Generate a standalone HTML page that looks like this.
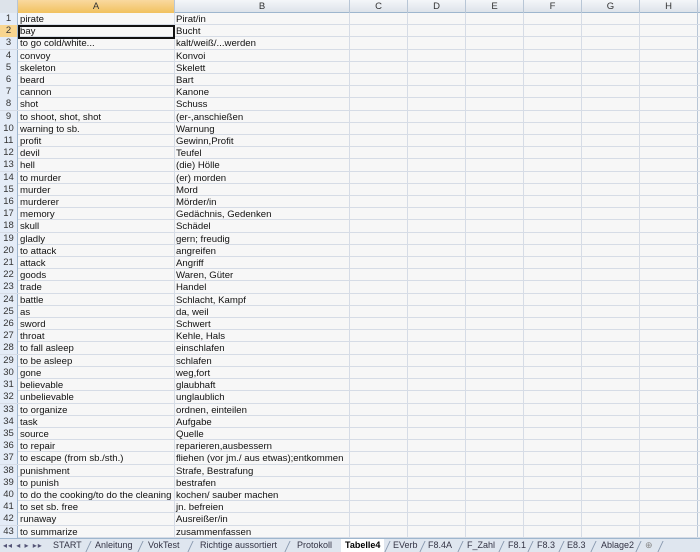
<!DOCTYPE html>
<html><head><meta charset="utf-8"><style>
*{margin:0;padding:0;box-sizing:border-box}
body{width:700px;height:552px;overflow:hidden;background:#f7f7f7;font-family:"Liberation Sans",Arial,sans-serif;font-size:9.6px;color:#111;position:relative}
.hdr{position:absolute;top:0;left:0;height:13px;width:700px;background:linear-gradient(#f4f6f9,#dde3ea);border-bottom:1px solid #9eb6ce}
.hdr div{position:absolute;top:0;height:13px;border-right:1px solid #b8c6d6;text-align:center;line-height:13px;color:#333;font-size:9.5px}
.hdr .a{background:linear-gradient(#f9d99f,#f1c15f)}
.rows{position:absolute;top:13px;left:0;width:700px}
.r{height:12.21px;position:relative;border-bottom:1px solid #d6dce6}
.r span{position:absolute;top:1px;height:12px;line-height:12px;white-space:nowrap;overflow:visible}
.r .n{top:0;left:0;width:18px;text-align:center;background:#e4ecf7;color:#333;border-right:1px solid #9eb6ce;font-size:9.5px}
.c1{left:20px}.c2{left:176px}
.vl{position:absolute;top:0;width:1px;height:538px;background:#d6dce6}
.sel{position:absolute;left:18px;top:25px;width:157px;height:13.5px;border:2px solid #111}
.tabs{position:absolute;left:0;top:538px;width:700px;height:14px;background:#dfe6ef;border-top:1px solid #9eb6ce;font-size:9px;color:#334;white-space:nowrap}
.tabs span{position:absolute;top:0;line-height:13px}
.tabs .act{background:#fff;font-weight:bold;color:#000;padding:0 4px}
.tabs i{position:absolute;top:2px;width:1px;height:11px;background:#8a9ab0;transform:skewX(-25deg)}
</style></head><body>
<div class="vl" style="left:174px"></div><div class="vl" style="left:349px"></div><div class="vl" style="left:407px"></div><div class="vl" style="left:465px"></div><div class="vl" style="left:523px"></div><div class="vl" style="left:581px"></div><div class="vl" style="left:639px"></div><div class="vl" style="left:697px;background:#b8c6d6"></div>
<div class="hdr">
<div style="left:0;width:18px;background:#dde3ea"></div>
<div class="a" style="left:18px;width:157px">A</div>
<div style="left:175px;width:175px">B</div>
<div style="left:350px;width:58px">C</div>
<div style="left:408px;width:58px">D</div>
<div style="left:466px;width:58px">E</div>
<div style="left:524px;width:58px">F</div>
<div style="left:582px;width:58px">G</div>
<div style="left:640px;width:58px">H</div>
</div>
<div class="rows">
<div class="r"><span class="n">1</span><span class="c1">pirate</span><span class="c2">Pirat/in</span></div>
<div class="r"><span class="n" style="background:#f8d58f">2</span><span class="c1">bay</span><span class="c2">Bucht</span></div>
<div class="r"><span class="n">3</span><span class="c1">to go cold/white...</span><span class="c2">kalt/weiß/...werden</span></div>
<div class="r"><span class="n">4</span><span class="c1">convoy</span><span class="c2">Konvoi</span></div>
<div class="r"><span class="n">5</span><span class="c1">skeleton</span><span class="c2">Skelett</span></div>
<div class="r"><span class="n">6</span><span class="c1">beard</span><span class="c2">Bart</span></div>
<div class="r"><span class="n">7</span><span class="c1">cannon</span><span class="c2">Kanone</span></div>
<div class="r"><span class="n">8</span><span class="c1">shot</span><span class="c2">Schuss</span></div>
<div class="r"><span class="n">9</span><span class="c1">to shoot, shot, shot</span><span class="c2">(er-,anschießen</span></div>
<div class="r"><span class="n">10</span><span class="c1">warning to sb.</span><span class="c2">Warnung</span></div>
<div class="r"><span class="n">11</span><span class="c1">profit</span><span class="c2">Gewinn,Profit</span></div>
<div class="r"><span class="n">12</span><span class="c1">devil</span><span class="c2">Teufel</span></div>
<div class="r"><span class="n">13</span><span class="c1">hell</span><span class="c2">(die) Hölle</span></div>
<div class="r"><span class="n">14</span><span class="c1">to murder</span><span class="c2">(er) morden</span></div>
<div class="r"><span class="n">15</span><span class="c1">murder</span><span class="c2">Mord</span></div>
<div class="r"><span class="n">16</span><span class="c1">murderer</span><span class="c2">Mörder/in</span></div>
<div class="r"><span class="n">17</span><span class="c1">memory</span><span class="c2">Gedächnis, Gedenken</span></div>
<div class="r"><span class="n">18</span><span class="c1">skull</span><span class="c2">Schädel</span></div>
<div class="r"><span class="n">19</span><span class="c1">gladly</span><span class="c2">gern; freudig</span></div>
<div class="r"><span class="n">20</span><span class="c1">to attack</span><span class="c2">angreifen</span></div>
<div class="r"><span class="n">21</span><span class="c1">attack</span><span class="c2">Angriff</span></div>
<div class="r"><span class="n">22</span><span class="c1">goods</span><span class="c2">Waren, Güter</span></div>
<div class="r"><span class="n">23</span><span class="c1">trade</span><span class="c2">Handel</span></div>
<div class="r"><span class="n">24</span><span class="c1">battle</span><span class="c2">Schlacht, Kampf</span></div>
<div class="r"><span class="n">25</span><span class="c1">as</span><span class="c2">da, weil</span></div>
<div class="r"><span class="n">26</span><span class="c1">sword</span><span class="c2">Schwert</span></div>
<div class="r"><span class="n">27</span><span class="c1">throat</span><span class="c2">Kehle, Hals</span></div>
<div class="r"><span class="n">28</span><span class="c1">to fall asleep</span><span class="c2">einschlafen</span></div>
<div class="r"><span class="n">29</span><span class="c1">to be asleep</span><span class="c2">schlafen</span></div>
<div class="r"><span class="n">30</span><span class="c1">gone</span><span class="c2">weg,fort</span></div>
<div class="r"><span class="n">31</span><span class="c1">believable</span><span class="c2">glaubhaft</span></div>
<div class="r"><span class="n">32</span><span class="c1">unbelievable</span><span class="c2">unglaublich</span></div>
<div class="r"><span class="n">33</span><span class="c1">to organize</span><span class="c2">ordnen, einteilen</span></div>
<div class="r"><span class="n">34</span><span class="c1">task</span><span class="c2">Aufgabe</span></div>
<div class="r"><span class="n">35</span><span class="c1">source</span><span class="c2">Quelle</span></div>
<div class="r"><span class="n">36</span><span class="c1">to repair</span><span class="c2">reparieren,ausbessern</span></div>
<div class="r"><span class="n">37</span><span class="c1">to escape (from sb./sth.)</span><span class="c2">fliehen (vor jm./ aus etwas);entkommen</span></div>
<div class="r"><span class="n">38</span><span class="c1">punishment</span><span class="c2">Strafe, Bestrafung</span></div>
<div class="r"><span class="n">39</span><span class="c1">to punish</span><span class="c2">bestrafen</span></div>
<div class="r"><span class="n">40</span><span class="c1">to do the cooking/to do the cleaning</span><span class="c2">kochen/ sauber machen</span></div>
<div class="r"><span class="n">41</span><span class="c1">to set sb. free</span><span class="c2">jn. befreien</span></div>
<div class="r"><span class="n">42</span><span class="c1">runaway</span><span class="c2">Ausreißer/in</span></div>
<div class="r"><span class="n">43</span><span class="c1">to summarize</span><span class="c2">zusammenfassen</span></div>
</div>
<div class="sel"></div>
<div class="tabs">
<span style="left:3px;color:#557;font-size:8px;letter-spacing:1px">◂◂ ◂ ▸ ▸▸</span>
<span style="left:53px">START</span><i style="left:88px"></i>
<span style="left:95px">Anleitung</span><i style="left:140px"></i>
<span style="left:148px">VokTest</span><i style="left:190px"></i>
<span style="left:200px">Richtige aussortiert</span><i style="left:287px"></i>
<span style="left:297px">Protokoll</span>
<span class="act" style="left:341px">Tabelle4</span><i style="left:387px"></i>
<span style="left:393px">EVerb</span><i style="left:422px"></i>
<span style="left:428px">F8.4A</span><i style="left:460px"></i>
<span style="left:467px">F_Zahl</span><i style="left:501px"></i>
<span style="left:508px">F8.1</span><i style="left:530px"></i>
<span style="left:537px">F8.3</span><i style="left:561px"></i>
<span style="left:567px">E8.3</span><i style="left:593px"></i>
<span style="left:601px">Ablage2</span><i style="left:638px"></i>
<span style="left:645px;color:#888">⊕</span><i style="left:660px"></i>
</div>
</body></html>
